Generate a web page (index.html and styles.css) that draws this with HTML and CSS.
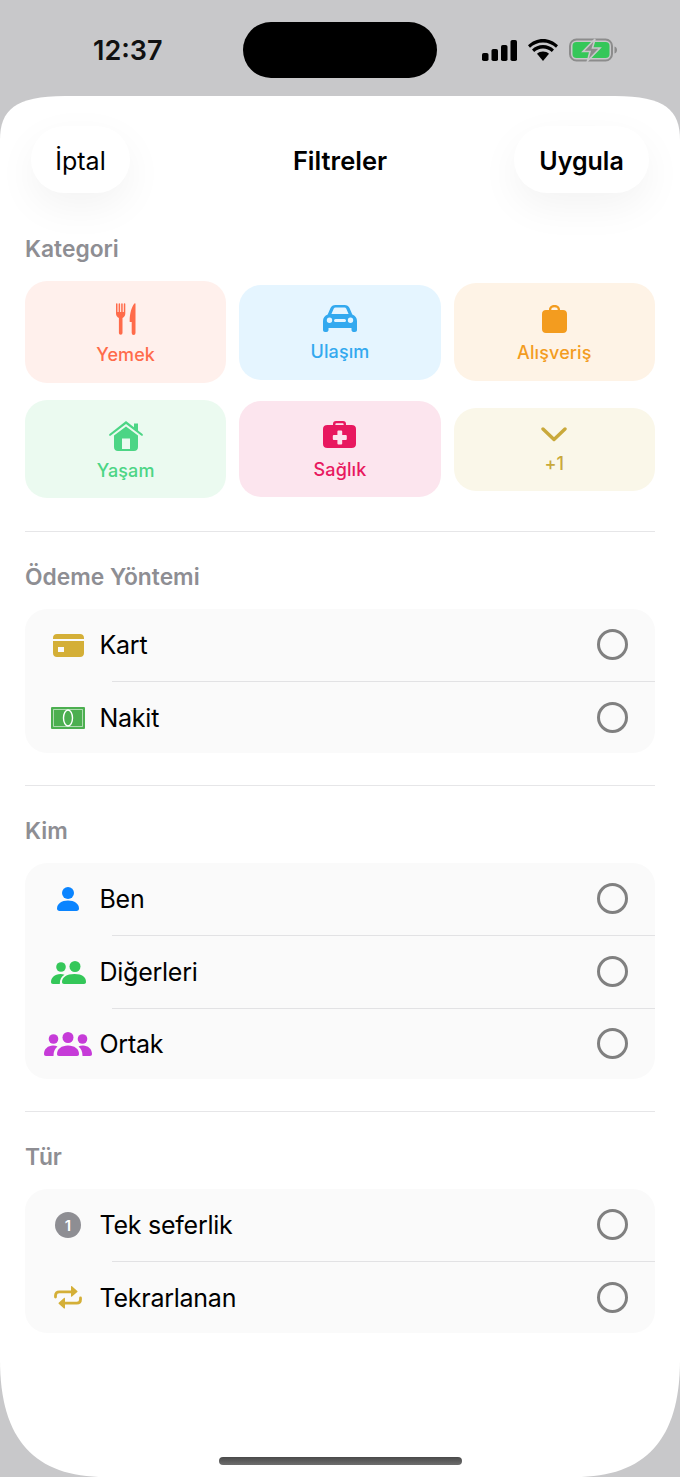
FILE: index.html
```html
<!DOCTYPE html>
<html lang="tr">
<head>
<meta charset="utf-8">
<title>Filtreler</title>
<link rel="stylesheet" href="styles.css">
</head>
<body>
<div class="phone">
  <div class="status">
    <span class="time">12:37</span>
    <span class="island"></span>
    <svg class="signal" viewBox="0 0 35 21"><rect x="0" y="13" width="6.500" height="8" rx="1.800"/><rect x="9.500" y="9" width="6.500" height="12" rx="1.800"/><rect x="19" y="5" width="6.500" height="16" rx="1.800"/><rect x="28.500" y="0" width="6.500" height="21" rx="1.800"/></svg>
    <svg class="wifi" viewBox="0 0 30 22"><path d="M15 3.500c-5 0-9.600 2-13 5.200L0 6.300C4 2.400 9.300 0 15 0s11 2.400 15 6.300l-2 2.400C24.600 5.500 20 3.500 15 3.500z"/><path d="M15 9.500c-3.400 0-6.400 1.300-8.800 3.400L4 10.400C7 7.800 10.800 6.100 15 6.100s8 1.700 11 4.300l-2.200 2.500C21.400 10.800 18.400 9.500 15 9.500z"/><path d="M15 12.500c2.300 0 4.400.9 6 2.300L15 22 9 14.800c1.600-1.400 3.700-2.300 6-2.300z"/></svg>
    <svg class="battery" viewBox="0 0 48 24"><rect x="1" y="1.500" width="42" height="21" rx="6.500" fill="none" stroke="#8c8c8c" stroke-width="2"/><rect x="3.500" y="4" width="37" height="16" rx="4" fill="#35c759"/><path d="M45.500 8.500c1.600.5 2.500 1.800 2.500 3.500s-.9 3-2.500 3.500z" fill="#8c8c8c"/><path d="M26 1 14 13.500h7L18.500 23 31 10h-7.500z" fill="#8c8c8c" stroke="#c8c8ca" stroke-width="1.600"/></svg>
  </div>

  <main class="sheet">
    <header class="topbar">
      <button class="pill pill-cancel">İptal</button>
      <h1 class="title">Filtreler</h1>
      <button class="pill pill-apply">Uygula</button>
    </header>

    <section class="section section-first">
      <h2 class="label">Kategori</h2>
      <div class="tiles">
        <div class="tile tile-food">
          <svg class="tile-icon" width="20" height="32" viewBox="0 0 20 32"><path d="M0 1a.75.75 0 0 1 1.500 0v8h1.100V1a.75.75 0 0 1 1.500 0v8h1.100V1a.75.75 0 0 1 1.500 0v8h1.100V1a.75.75 0 0 1 1.500 0v9.500c0 2.300-1.200 3.700-2.800 4.500v15a1.800 1.800 0 0 1-3.600 0V15C1.200 14.200 0 12.800 0 10.500z"/><path d="M19.500.8V30a1.900 1.900 0 0 1-3.800 0V19h-2c-.3-7.600 1.800-15.500 5-18.700.4-.4.800 0 .8.500z"/></svg>
          <span>Yemek</span>
        </div>
        <div class="tile tile-transport">
          <svg class="tile-icon" width="34" height="27" viewBox="0 0 34 27"><path fill-rule="evenodd" d="M7.500 3C8.500 1 10 0 12.500 0h9c2.500 0 4 1 5 3l2.800 6.500c2.800 1 4.700 3.200 4.700 6.500v9c0 1.100-.9 2-2 2h-1.500c-1.100 0-2-.9-2-2v-2H5.500v2c0 1.100-.9 2-2 2H2c-1.100 0-2-.9-2-2v-9c0-3.300 1.900-5.500 4.700-6.500zM10.800 3.500 8.400 9.100h17.200l-2.400-5.600c-.3-.7-.9-1-1.700-1h-9c-.8 0-1.400.3-1.700 1zM6.500 12.500a2.700 2.700 0 1 0 0 5.400 2.700 2.700 0 0 0 0-5.400zm21 0a2.700 2.700 0 1 0 0 5.400 2.700 2.700 0 0 0 0-5.400zM12.500 14a1.500 1.500 0 0 0 0 3h9a1.500 1.500 0 0 0 0-3z"/></svg>
          <span>Ulaşım</span>
        </div>
        <div class="tile tile-shopping">
          <svg class="tile-icon" width="25" height="28" viewBox="0 0 25 28"><path fill-rule="evenodd" d="M7 5V4.500C7 1.800 9.300 0 12.500 0S18 1.800 18 4.500V5h3c2.500 0 4 1.500 4 4v15c0 2.500-1.500 4-4 4H4c-2.500 0-4-1.500-4-4V9c0-2.500 1.500-4 4-4zm2.300 0h6.400v-.5c0-1.400-1.300-2.300-3.200-2.300S9.300 3.100 9.300 4.500z"/></svg>
          <span>Alışveriş</span>
        </div>
        <div class="tile tile-home">
          <svg class="tile-icon" width="34" height="30" viewBox="0 0 34 30"><path d="M17 0 25 6.300V2.500h4v7l4.500 3.600c.7.600.4 1.700-.6 1.700-.3 0-.5-.1-.7-.3L17 2.900 1.800 14.500c-.2.200-.4.300-.7.300-1 0-1.300-1.100-.6-1.700z"/><path fill-rule="evenodd" d="M17 5.500 29 14.600V26c0 2.500-1.500 4-4 4H9c-2.500 0-4-1.500-4-4V14.600zM13 17.500V28h8V17.500z"/></svg>
          <span>Yaşam</span>
        </div>
        <div class="tile tile-health">
          <svg class="tile-icon" width="33" height="27" viewBox="0 0 33 27"><path fill-rule="evenodd" d="M10 4V3c0-2 1-3 3-3h7c2 0 3 1 3 3v1h5.500c3 0 4.500 1.500 4.500 4v15c0 2.500-1.500 4-4.500 4h-24C1.500 27 0 25.500 0 23V8c0-2.500 1.500-4 4.500-4zm2.400 0h8.200V3.200c0-.6-.3-.9-.9-.9h-6.400c-.6 0-.9.300-.9.900zm2 6.500v3.600h-3.600a1 1 0 0 0-1 1v2.800a1 1 0 0 0 1 1h3.600v3.600a1 1 0 0 0 1 1h2.800a1 1 0 0 0 1-1v-3.600h3.600a1 1 0 0 0 1-1v-2.800a1 1 0 0 0-1-1h-3.600v-3.600a1 1 0 0 0-1-1h-2.800a1 1 0 0 0-1 1z"/></svg>
          <span>Sağlık</span>
        </div>
        <div class="tile tile-more">
          <svg class="tile-icon" width="26" height="15" viewBox="0 0 26 15"><path d="M2 2 13 12.500 24 2" fill="none" stroke="currentColor" stroke-width="3.400" stroke-linecap="round" stroke-linejoin="round"/></svg>
          <span>+1</span>
        </div>
      </div>
    </section>

    <section class="section">
      <h2 class="label">Ödeme Yöntemi</h2>
      <div class="card">
        <div class="row">
          <span class="row-icon">
            <svg width="31" height="23" viewBox="0 0 31 23"><path fill="#d4af37" fill-rule="evenodd" d="M4 0h23c2.500 0 4 1.500 4 4v1H0V4c0-2.500 1.500-4 4-4zM0 7h31v12c0 2.500-1.500 4-4 4H4c-2.500 0-4-1.500-4-4zm5 6v5h6v-5z"/></svg>
          </span>
          <span class="row-text">Kart</span><span class="radio"></span>
        </div>
        <div class="sep"></div>
        <div class="row">
          <span class="row-icon">
            <svg width="34" height="22" viewBox="0 0 34 22"><rect width="34" height="22" rx="1" fill="#4caf50"/><path d="M2.500 2.500h29v17h-29z" fill="none" stroke="#fff" stroke-opacity=".55" stroke-width="1"/><ellipse cx="17" cy="11" rx="4.500" ry="8" fill="none" stroke="#fff" stroke-width="1.400"/></svg>
          </span>
          <span class="row-text">Nakit</span><span class="radio"></span>
        </div>
      </div>
    </section>

    <section class="section">
      <h2 class="label">Kim</h2>
      <div class="card card-tall">
        <div class="row">
          <span class="row-icon">
            <svg width="22" height="24" viewBox="0 0 22 24"><circle cx="11" cy="6" r="6" fill="#0a84ff"/><path fill="#0a84ff" d="M0 21.500C0 17 4.500 13.500 11 13.500S22 17 22 21.500c0 1.600-1 2.500-2.500 2.500h-17C1 24 0 23.100 0 21.500z"/></svg>
          </span>
          <span class="row-text">Ben</span><span class="radio"></span>
        </div>
        <div class="sep"></div>
        <div class="row">
          <span class="row-icon">
            <svg width="35" height="23" viewBox="0 0 35 23"><g fill="#34c759"><circle cx="10" cy="6" r="4.800"/><circle cx="24" cy="5.500" r="5.500"/><path d="M0 21c0-4 3.500-8 9.500-8 1.500 0 2.800.2 4 .8C10.500 15.500 8.800 18.300 8.800 23H2c-1.300 0-2-.8-2-2z"/><path d="M11 21c0-4.500 4.500-8 12.500-8S35 16.500 35 21c0 1.300-.8 2-2 2H13c-1.200 0-2-.7-2-2z"/></g></svg>
          </span>
          <span class="row-text">Diğerleri</span><span class="radio"></span>
        </div>
        <div class="sep"></div>
        <div class="row">
          <span class="row-icon">
            <svg width="48" height="24" viewBox="0 0 48 24"><g fill="#c63bd8"><circle cx="9.500" cy="7" r="4.800"/><circle cx="24" cy="5.500" r="5.500"/><circle cx="38.500" cy="7" r="4.800"/><path d="M0 22c0-5 4-8.500 9-8.500 1.800 0 3.300.4 4.500 1.100C11 16.500 9.500 19.500 9.500 24H2c-1.300 0-2-.7-2-2z"/><path d="M48 22c0-5-4-8.500-9-8.500-1.800 0-3.300.4-4.500 1.100 2.500 1.900 4 4.900 4 9.400H46c1.300 0 2-.7 2-2z"/><path d="M13 22c0-5 4.500-8.500 11-8.500S35 17 35 22c0 1.300-.7 2-2 2H15c-1.300 0-2-.7-2-2z"/></g></svg>
          </span>
          <span class="row-text">Ortak</span><span class="radio"></span>
        </div>
      </div>
    </section>

    <section class="section">
      <h2 class="label">Tür</h2>
      <div class="card">
        <div class="row">
          <span class="row-icon"><span class="badge">1</span></span>
          <span class="row-text">Tek seferlik</span><span class="radio"></span>
        </div>
        <div class="sep"></div>
        <div class="row">
          <span class="row-icon">
            <svg width="28" height="23" viewBox="0 0 28 23"><g fill="none" stroke="#d4af37" stroke-width="2.800" stroke-linecap="round"><path d="M1.500 11V9.500c0-2.200 1.500-3.700 3.700-3.700H18"/><path d="M26.500 12v1.500c0 2.200-1.500 3.700-3.700 3.700H10"/></g><path fill="#d4af37" d="M17 .6c0-.5.600-.8 1-.4l5.300 4.700c.3.300.3.700 0 1L18 10.600c-.4.400-1 .1-1-.4z"/><path fill="#d4af37" d="M11 12.400c0-.5-.600-.8-1-.4l-5.300 4.700c-.3.300-.3.700 0 1L10 22.400c.4.400 1 .1 1-.4z"/></svg>
          </span>
          <span class="row-text">Tekrarlanan</span><span class="radio"></span>
        </div>
      </div>
    </section>

    <div class="home-indicator"></div>
  </main>
</div>
</body>
</html>
```

FILE: styles.css
```css
* { box-sizing: border-box; }
html, body { margin: 0; padding: 0; }
body {
  width: 680px;
  height: 1477px;
  overflow: hidden;
  background: #c8c8ca;
  font-family: Inter, "Liberation Sans", sans-serif;
  color: #000;
}
.phone { display: flex; flex-direction: column; height: 1477px; }

.status { height: 96px; flex: none; display: flex; align-items: center; }
.time { margin-left: 93px; width: 150px; font-size: 27px; font-weight: 600; line-height: 32px; color: #111; margin-top: 6px; }
.island { width: 194px; height: 56px; border-radius: 28px; background: #000; margin-top: 4px; }
.signal { width: 35px; height: 21px; margin-left: 45px; fill: #000; margin-top: 4px; }
.wifi { width: 30px; height: 22px; margin-left: 11px; fill: #000; margin-top: 3px; }
.battery { width: 48px; height: 24px; margin-left: 11px; margin-top: 4px; }

.sheet {
  flex: 1;
  background: #fff;
  clip-path: path("M0 44 C0 14 15 0 65 0 H615 C665 0 680 14 680 44 V1264 C680 1344 645 1381 575 1381 H105 C35 1381 0 1344 0 1264 Z");
  display: flex;
  flex-direction: column;
  padding: 30px 25px 0;
  position: relative;
}
.topbar { display: grid; grid-template-columns: 1fr auto 1fr; align-items: center; height: 67px; padding: 0 6px; }
.pill {
  height: 67px;
  border: 0;
  border-radius: 34px;
  background: #fff;
  box-shadow: 0 14px 40px rgba(0, 0, 0, .05);
  font-family: inherit;
  font-size: 25px;
  color: #000;
  padding: 2px 0 0;
}
.pill-cancel { width: 99px; font-weight: 400; justify-self: start; }
.pill-apply { width: 135px; font-weight: 600; justify-self: end; }
.title { margin: 0; font-size: 25.500px; font-weight: 600; line-height: 32px; padding-top: 2px; }

.section { padding: 32px 0; border-bottom: 1px solid #e6e6e8; display: flex; flex-direction: column; gap: 19px; }
.section:last-of-type { border-bottom: 0; }
.section-first { padding: 43px 0 33px; gap: 19px; }
.label { margin: 0; font-size: 22.800px; line-height: 26px; font-weight: 600; color: #8e8e93; }

.tiles { display: grid; grid-template-columns: repeat(3, 1fr); grid-template-rows: 102px 98px; column-gap: 13px; row-gap: 17px; align-items: center; }
.tile { display: flex; flex-direction: column; align-items: center; justify-content: center; font-size: 18px; line-height: 22px; font-weight: 500; letter-spacing: .1px; border-radius: 22px; padding-top: 4px; }
.tile-icon { fill: currentColor; display: block; }
.tile-food { height: 102px; background: #fff0ec; color: #ff6b4a; gap: 9px; }
.tile-transport { height: 95px; background: #e5f5ff; color: #33a9ef; gap: 9px; }
.tile-shopping { height: 98px; background: #fef3e6; color: #f39c1f; gap: 9px; }
.tile-home { height: 98px; background: #ebfaf0; color: #4cd585; gap: 9px; }
.tile-health { height: 96px; background: #fce5ee; color: #e8185f; gap: 11px; }
.tile-more { height: 83px; background: #faf7e9; color: #c9a93b; gap: 11px; }

.card { background: #fafafa; border-radius: 22px; display: flex; flex-direction: column; }
.row { height: 72px; display: flex; align-items: center; padding: 0 27px 0 19px; }
.row:last-child { height: 71px; }
.card-tall .row:last-child { height: 70px; }
.row-icon { width: 48px; display: flex; justify-content: center; align-items: center; flex: none; }
.row-text { margin-left: 7.500px; flex: 1; font-size: 25px; letter-spacing: -.25px; line-height: 32px; color: #000; }
.radio { width: 31px; height: 31px; border-radius: 50%; border: 3px solid #808080; flex: none; margin-top: -1px; }
.sep { height: 1px; background: #e2e2e4; margin-left: 87px; }
.badge { width: 26px; height: 26px; border-radius: 50%; background: #8e8e93; color: #fff; font-size: 15px; font-weight: 600; display: flex; align-items: center; justify-content: center; }

.home-indicator { position: absolute; left: 219px; bottom: 12px; width: 243px; height: 8px; border-radius: 4px; background: linear-gradient(#4a4a4a, #6e6e6e); }
```
